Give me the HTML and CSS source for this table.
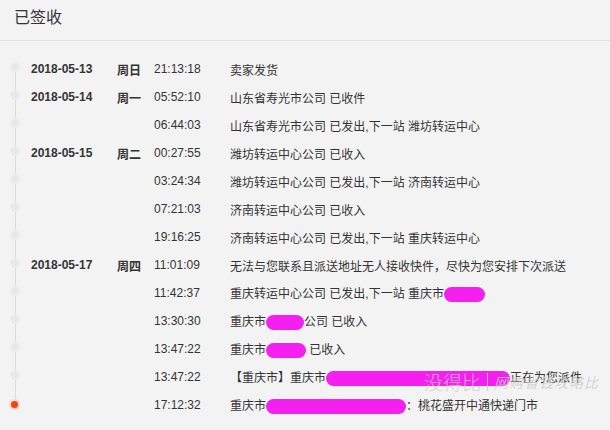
FILE: index.html
```html
<!DOCTYPE html>
<html lang="zh-CN">
<head>
  <meta charset="UTF-8">
  <meta name="viewport" content="width=device-width, initial-scale=1.0">
  <title>物流详情</title>
  <link rel="stylesheet" href="styles.css">
</head>
<body>
  <div class="header">已签收</div>

  <div class="track">
    <div class="row first">
      <span class="dot"></span>
      <span class="date">2018-05-13</span>
      <span class="week">周日</span>
      <span class="time">21:13:18</span>
      <span class="desc">卖家发货</span>
    </div>
    <div class="row">
      <span class="dot"></span>
      <span class="date">2018-05-14</span>
      <span class="week">周一</span>
      <span class="time">05:52:10</span>
      <span class="desc">山东省寿光市公司 已收件</span>
    </div>
    <div class="row">
      <span class="dot"></span>
      <span class="date"></span>
      <span class="week"></span>
      <span class="time">06:44:03</span>
      <span class="desc">山东省寿光市公司 已发出,下一站 潍坊转运中心</span>
    </div>
    <div class="row">
      <span class="dot"></span>
      <span class="date">2018-05-15</span>
      <span class="week">周二</span>
      <span class="time">00:27:55</span>
      <span class="desc">潍坊转运中心公司 已收入</span>
    </div>
    <div class="row">
      <span class="dot"></span>
      <span class="date"></span>
      <span class="week"></span>
      <span class="time">03:24:34</span>
      <span class="desc">潍坊转运中心公司 已发出,下一站 济南转运中心</span>
    </div>
    <div class="row">
      <span class="dot"></span>
      <span class="date"></span>
      <span class="week"></span>
      <span class="time">07:21:03</span>
      <span class="desc">济南转运中心公司 已收入</span>
    </div>
    <div class="row">
      <span class="dot"></span>
      <span class="date"></span>
      <span class="week"></span>
      <span class="time">19:16:25</span>
      <span class="desc">济南转运中心公司 已发出,下一站 重庆转运中心</span>
    </div>
    <div class="row">
      <span class="dot"></span>
      <span class="date">2018-05-17</span>
      <span class="week">周四</span>
      <span class="time">11:01:09</span>
      <span class="desc">无法与您联系且派送地址无人接收快件，尽快为您安排下次派送</span>
    </div>
    <div class="row">
      <span class="dot"></span>
      <span class="date"></span>
      <span class="week"></span>
      <span class="time">11:42:37</span>
      <span class="desc">重庆转运中心公司 已发出,下一站 重庆市<i class="blot" style="width:41px"></i></span>
    </div>
    <div class="row">
      <span class="dot"></span>
      <span class="date"></span>
      <span class="week"></span>
      <span class="time">13:30:30</span>
      <span class="desc">重庆市<i class="blot" style="width:38px"></i>公司 已收入</span>
    </div>
    <div class="row">
      <span class="dot"></span>
      <span class="date"></span>
      <span class="week"></span>
      <span class="time">13:47:22</span>
      <span class="desc">重庆市<i class="blot" style="width:40px"></i> 已收入</span>
    </div>
    <div class="row">
      <span class="dot"></span>
      <span class="date"></span>
      <span class="week"></span>
      <span class="time">13:47:22</span>
      <span class="desc">【重庆市】重庆市<i class="blot" style="width:184px"></i>正在为您派件</span>
    </div>
    <div class="row last">
      <span class="dot now"></span>
      <span class="date"></span>
      <span class="week"></span>
      <span class="time">17:12:32</span>
      <span class="desc">重庆市<i class="blot" style="width:140px"></i>：桃花盛开中通快递门市</span>
    </div>

    <div class="mark">
      <span class="mark-big">没得比</span>
      <span class="mark-bar"></span>
      <span class="mark-small">网购省钱攻略比</span>
    </div>
  </div>
</body>
</html>
```

FILE: styles.css
```css
body {
  margin: 0;
  background-color: #f3f3f3;
  color: #333;
  font-family: "Liberation Sans", Arial, "Noto Sans CJK SC", sans-serif;
  font-size: 12px;
}
.header {
  height: 41px;
  line-height: 36px;
  padding-left: 14px;
  font-size: 16px;
  color: #333;
  border-bottom: 1px solid #e2e2e2;
  box-sizing: border-box;
}
.track {
  position: relative;
  padding-top: 14px;
}
.row {
  display: grid;
  grid-template-columns: 31px 86px 37px 76px 1fr;
  align-items: center;
  height: 28px;
  background: linear-gradient(#dcdcdc, #dcdcdc) no-repeat 15px 0 / 1px 100%;
}
.row.first {
  background-position: 15px 12px;
}
.row.last {
  background-size: 1px 12px;
}
.dot {
  width: 6px;
  height: 6px;
  margin-left: 12px;
  margin-bottom: 4px;
  border-radius: 50%;
  background-color: #e8e8e8;
  box-shadow: 0 0 0 2px #ececec;
}
.dot.now {
  width: 7px;
  height: 7px;
  margin-left: 11px;
  margin-bottom: 2px;
  background-color: #f5400f;
  box-shadow: 0 0 0 2px #fbd6c8;
}
.date, .week {
  font-weight: bold;
}
.desc {
  white-space: nowrap;
}
.blot {
  display: inline-block;
  height: 15px;
  vertical-align: middle;
  background-color: #f51ff0;
  border-radius: 8px;
}
.mark {
  position: absolute;
  left: 424px;
  top: 331px;
  display: flex;
  align-items: center;
  gap: 6px;
  color: rgba(205, 205, 205, 0.85);
}
.mark-big {
  font-size: 19px;
  line-height: 20px;
  font-family: "Noto Sans CJK SC", sans-serif;
  font-weight: 300;
}
.mark-bar {
  width: 1px;
  height: 18px;
  background-color: rgba(205, 205, 205, 0.85);
}
.mark-small {
  font-size: 14px;
  line-height: 16px;
  font-style: italic;
  font-family: "Noto Sans CJK SC", sans-serif;
  letter-spacing: 1px;
}
```
